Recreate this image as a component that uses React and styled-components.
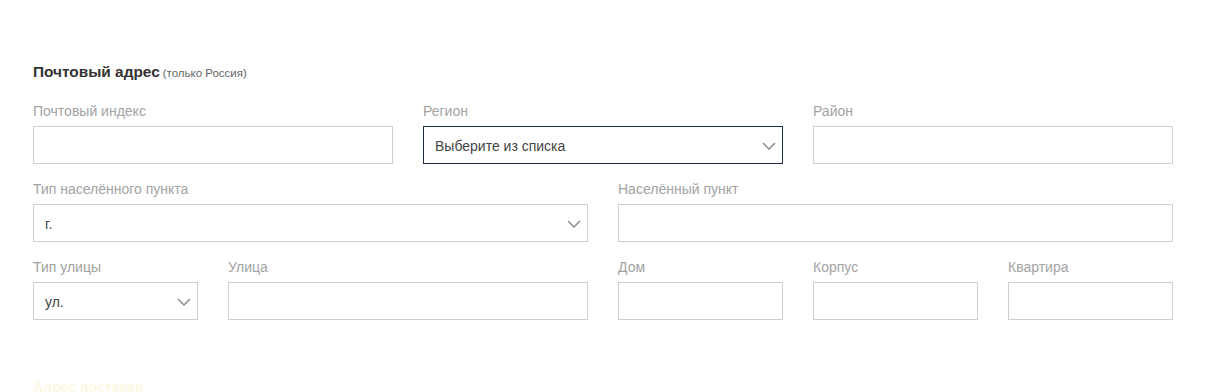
import styled, { createGlobalStyle } from "styled-components";

const GlobalStyle = createGlobalStyle`
  body {
    margin: 0;
    background: #ffffff;
    font-family: "Liberation Sans", Arial, sans-serif;
  }
`;

const Page = styled.div`
  padding: 62px 33px 0;
  width: 1206px;
  height: 392px;
  overflow: hidden;
  box-sizing: border-box;
`;

const Title = styled.div`
  font-size: 15.4px;
  line-height: 20px;
  font-weight: 700;
  color: #333333;
  margin-bottom: 17px;
`;

const Note = styled.span`
  font-size: 11.5px;
  font-weight: 400;
  color: #666666;
  margin-left: 3px;
`;

const Grid = styled.div`
  display: grid;
  grid-template-columns: repeat(6, 165px);
  column-gap: 30px;
  row-gap: 14px;
`;

const Field = styled.div`
  grid-column: span ${(p) => p.span || 1};
  display: flex;
  flex-direction: column;
`;

const Label = styled.div`
  font-size: 14px;
  line-height: 20px;
  padding-top: 1px;
  color: #a3a3a3;
  margin-bottom: 5px;
  white-space: nowrap;
`;

const Box = styled.div`
  height: 38px;
  box-sizing: border-box;
  border: 1px solid ${(p) => (p.active ? "#1d2a44" : "#cfcfcf")};
  background: #fff;
  display: flex;
  align-items: center;
  justify-content: space-between;
  padding: 1px 6px 0 11px;
  font-size: 14px;
  color: #444444;
`;

const Faint = styled.div`
  margin-top: 59px;
  font-size: 14px;
  font-weight: 700;
  color: #fbf8e3;
`;

const Chevron = () => (
  <svg width="14" height="8" viewBox="0 0 14 8">
    <polyline
      points="1,1 7,7 13,1"
      fill="none"
      stroke="#8c8c8c"
      strokeWidth="1.5"
    />
  </svg>
);

const Input = ({ label, span }) => (
  <Field span={span}>
    <Label>{label}</Label>
    <Box />
  </Field>
);

const Select = ({ label, span, value, active }) => (
  <Field span={span}>
    <Label>{label}</Label>
    <Box active={active}>
      <span>{value}</span>
      <Chevron />
    </Box>
  </Field>
);

export default function App() {
  return (
    <>
      <GlobalStyle />
      <Page>
        <Title>
          Почтовый адрес<Note>(только Россия)</Note>
        </Title>
        <Grid>
          <Input label="Почтовый индекс" span={2} />
          <Select label="Регион" span={2} value="Выберите из списка" active />
          <Input label="Район" span={2} />

          <Select label="Тип населённого пункта" span={3} value="г." />
          <Input label="Населённый пункт" span={3} />

          <Select label="Тип улицы" value="ул." />
          <Input label="Улица" span={2} />
          <Input label="Дом" />
          <Input label="Корпус" />
          <Input label="Квартира" />
        </Grid>
        <Faint>Адрес доставки</Faint>
      </Page>
    </>
  );
}
